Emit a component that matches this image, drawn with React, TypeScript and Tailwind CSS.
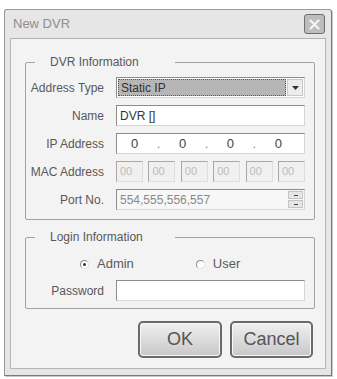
import React from 'react';

const FONT = { fontFamily: '"Liberation Sans", Arial, sans-serif' };

// Label + control row in the group boxes
function Row({ label, children }: { label: string; children: React.ReactNode }) {
  return (
    <div className="flex items-center h-[21px]">
      <div className="w-[78px] text-right text-[12px] text-[#585858] shrink-0">{label}</div>
      <div className="ml-[12px] w-[189px] h-full">{children}</div>
    </div>
  );
}

function Radio({ checked, label, className }: { checked?: boolean; label: string; className?: string }) {
  return (
    <div className={'flex items-center ' + (className ?? '')}>
      <span className="relative w-[9px] h-[9px] rounded-full border border-[#8a8a8a] border-r-[#e0e0e0] border-b-[#e0e0e0] bg-white flex items-center justify-center">
        {checked && <span className="w-[3px] h-[3px] rounded-full bg-[#333]" />}
      </span>
      <span className="ml-[8px] text-[13px] text-[#5a5a5a]">{label}</span>
    </div>
  );
}

export default function App() {
  const mac = ['00', '00', '00', '00', '00', '00'];

  return (
    <div className="w-[337px] h-[379px] bg-white pt-[9px] pl-[4px]" style={FONT}>
      <div className="w-[328px] h-[367px] bg-[#e6e6e6] border border-[#9a9a9a] border-r-[#7a7a7a] border-b-[#7a7a7a] rounded-t-[3px] flex flex-col shadow-[1px_1px_0_#c8c8c8]">
        {/* title bar */}
        <div className="h-[28px] flex items-center justify-between pl-[8px] pr-[6px] shrink-0">
          <span className="text-[13px] text-[#8e8e8e]">New DVR</span>
          <div className="w-[21px] h-[20px] rounded-[3px] border border-[#6e6e6e] bg-[#bdbdbd] flex items-center justify-center">
            <svg width="11" height="11" viewBox="0 0 11 11">
              <path d="M1.5 1.5 L9.5 9.5 M9.5 1.5 L1.5 9.5" stroke="#f4f4f4" strokeWidth="2.2" strokeLinecap="round" />
            </svg>
          </div>
        </div>

        {/* client area */}
        <div className="mx-[5px] flex-1 mb-[6px] bg-[#f3f3f3] border border-[#b4b4b4] pt-[16px] pl-[14px] pr-[10px]">
          {/* DVR Information */}
          <fieldset className="border border-[#a2a2a2] rounded-[2px] pl-0 pr-[9px] pb-[9px] pt-[7px]">
            <legend className="ml-[9px] pl-[15px] w-[140px] text-[12px] text-[#585858] leading-[15px]">
              DVR Information
            </legend>
            <div className="flex flex-col gap-[7px]">
              <Row label="Address Type">
                <div className="h-full border border-[#8c8c8c] border-r-[#d6d6d6] border-b-[#d6d6d6] bg-white flex items-center p-[1px]">
                  <div className="flex-1 h-full bg-[#b6b6b6] border border-dotted border-[#555] flex items-center pl-[2px] text-[12px] text-[#333]">
                    Static IP
                  </div>
                  <div className="w-[16px] h-full flex items-center justify-center bg-[#ececec] border border-[#c8c8c8] ml-[1px]">
                    <svg width="7" height="4" viewBox="0 0 7 4">
                      <path d="M0 0 H7 L3.5 4 Z" fill="#333" />
                    </svg>
                  </div>
                </div>
              </Row>
              <Row label="Name">
                <div className="h-full border border-[#8c8c8c] border-r-[#d6d6d6] border-b-[#d6d6d6] bg-white flex items-center pl-[3px] text-[12px] text-[#333]">
                  DVR []
                </div>
              </Row>
              <Row label="IP Address">
                <div className="h-full border border-[#8c8c8c] border-r-[#d6d6d6] border-b-[#d6d6d6] bg-white flex items-center text-[13px] text-[#444] pl-[14px] pr-[22px] justify-between">
                  <span>0</span>
                  <span className="text-[#888]">.</span>
                  <span>0</span>
                  <span className="text-[#888]">.</span>
                  <span>0</span>
                  <span className="text-[#888]">.</span>
                  <span>0</span>
                </div>
              </Row>
              <Row label="MAC Address">
                <div className="h-full flex justify-between">
                  {mac.map((m, i) => (
                    <div
                      key={i}
                      className="w-[27px] h-full border border-[#a8a8a8] border-r-[#dedede] border-b-[#dedede] bg-[#f0f0f0] text-[11px] text-[#bbbbbb] pl-[3px] leading-[19px]"
                    >
                      {m}
                    </div>
                  ))}
                </div>
              </Row>
              <Row label="Port No.">
                <div className="h-full border border-[#8c8c8c] border-r-[#d6d6d6] border-b-[#d6d6d6] bg-[#f7f7f7] flex items-center">
                  <span className="flex-1 pl-[3px] text-[12px] text-[#8a8a8a]">554,555,556,557</span>
                  <div className="w-[17px] h-full flex flex-col gap-[1px] p-[1px]">
                    <div className="flex-1 bg-[#e6e6e6] border border-[#c4c4c4] flex items-center justify-center">
                      <span className="w-[4px] h-[1px] bg-[#444]" />
                    </div>
                    <div className="flex-1 bg-[#e6e6e6] border border-[#c4c4c4] flex items-center justify-center">
                      <span className="w-[4px] h-[1px] bg-[#444]" />
                    </div>
                  </div>
                </div>
              </Row>
            </div>
          </fieldset>

          {/* Login Information */}
          <fieldset className="mt-[10px] border border-[#a2a2a2] rounded-[2px] pl-0 pr-[9px] pb-[7px] pt-[9px]">
            <legend className="ml-[9px] pl-[15px] w-[140px] text-[12px] text-[#585858] leading-[15px]">
              Login Information
            </legend>
            <div className="flex items-center h-[20px]">
              <Radio checked label="Admin" className="ml-[54px]" />
              <Radio label="User" className="ml-[62px]" />
            </div>
            <div className="mt-[6px]">
              <Row label="Password">
                <div className="h-full border border-[#8c8c8c] border-r-[#d6d6d6] border-b-[#d6d6d6] bg-white" />
              </Row>
            </div>
          </fieldset>

          {/* buttons */}
          <div className="flex justify-end gap-[8px] mt-[12px] pr-[2px]">
            <button className="w-[84px] h-[37px] rounded-[5px] border-2 border-[#6a6a6a] bg-gradient-to-b from-[#f0f0f0] to-[#c8c8c8] shadow-[inset_0_0_0_1px_#f8f8f8] text-[18px] text-[#555]">
              OK
            </button>
            <button className="w-[83px] h-[37px] rounded-[5px] border-2 border-[#6a6a6a] bg-gradient-to-b from-[#f0f0f0] to-[#c8c8c8] shadow-[inset_0_0_0_1px_#f8f8f8] text-[18px] text-[#555]">
              Cancel
            </button>
          </div>
        </div>
      </div>
    </div>
  );
}
